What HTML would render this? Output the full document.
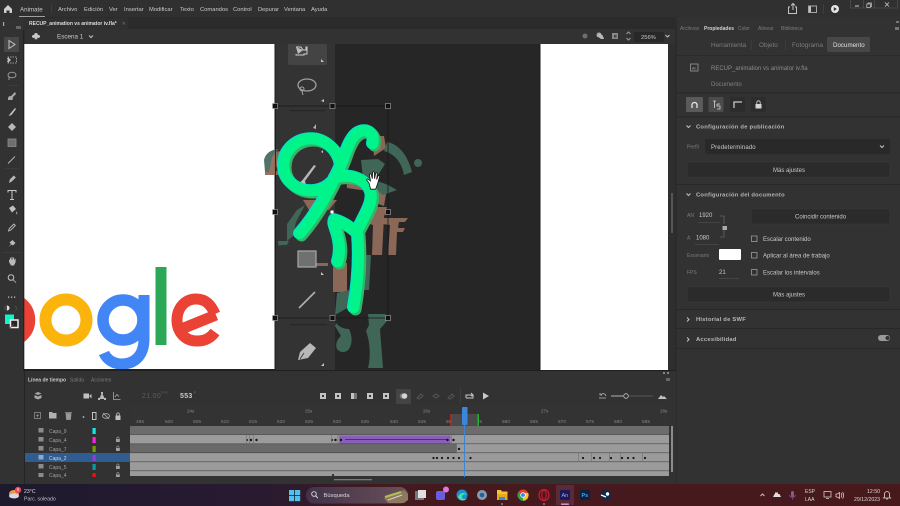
<!DOCTYPE html>
<html><head><meta charset="utf-8"><style>
html,body{margin:0;padding:0;width:900px;height:506px;overflow:hidden;background:#323232}
svg{display:block;position:absolute;left:0;top:0;filter:blur(.3px)}
text{font-family:"Liberation Sans",sans-serif;font-size:5.8px;fill:#cacaca}
.d{fill:#7c7c7c}.b{font-weight:bold}.h{font-weight:bold;letter-spacing:.25px;fill:#b8b8b8}
.i{fill:none;stroke:#c4c4c4;stroke-width:1}
</style></head><body>
<svg width="900" height="506" viewBox="0 0 900 506" xmlns="http://www.w3.org/2000/svg">
<defs>
<linearGradient id="tb" x1="0" x2="1" y1="0" y2="0"><stop offset="0" stop-color="#1d1a2e"/><stop offset=".3" stop-color="#2a1a30"/><stop offset=".42" stop-color="#44191f"/><stop offset="1" stop-color="#47191b"/></linearGradient>
<linearGradient id="sp" x1="0" x2="1" y1="0" y2="0"><stop offset="0" stop-color="#40324a"/><stop offset="1" stop-color="#6a5058"/></linearGradient>
<clipPath id="gc"><rect x="24" y="44" width="251" height="325"/></clipPath>
</defs>
<rect width="900" height="506" fill="#323232"/>
<!-- title bar -->
<rect width="900" height="17" fill="#303030"/>
<path d="M4 9 L8 5 L12 9 V13 H9.500 V10.500 H6.500 V13 H4Z" fill="#d0d0d0"/>
<text x="20" y="11.500" style="font-size:6.200px">Animate</text>
<rect x="19" y="16" width="26" height="1" fill="#a0a0a0"/>
<rect x="51" y="4" width=".7" height="9" fill="#444"/>
<text x="58" y="11">Archivo</text><text x="84" y="11">Edición</text><text x="109" y="11">Ver</text><text x="124" y="11">Insertar</text><text x="149" y="11">Modificar</text><text x="180" y="11">Texto</text><text x="200" y="11">Comandos</text><text x="233" y="11">Control</text><text x="258" y="11">Depurar</text><text x="284" y="11">Ventana</text><text x="311" y="11">Ayuda</text>
<path d="M790 7h-1.500v6.500h8v-6.500h-1.500M793 10V4M791 5.500l2-2 2 2" class="i"/>
<rect x="808.500" y="6" width="8" height="6.500" class="i" stroke-opacity=".8"/><rect x="809" y="6.500" width="2" height="5.500" fill="#c4c4c4"/>
<rect x="823" y="4" width=".7" height="10" fill="#444"/>
<circle cx="835" cy="9" r="4" fill="#e4e4e4"/><path d="M833.800 7l3 2-3 2z" fill="#303030"/>
<rect x="850.500" y="-1" width="47" height="9" fill="none" stroke="#555" stroke-width=".6"/>
<rect x="855" y="5.500" width="4" height="1" fill="#ccc"/><rect x="868" y="3" width="3.500" height="3.500" fill="none" stroke="#ccc" stroke-width=".7"/><rect x="866.800" y="4" width="3.500" height="3.500" fill="#303030" stroke="#ccc" stroke-width=".7"/>
<path d="M885 2.500l4 4M889 2.500l-4 4" stroke="#ccc" stroke-width=".8"/>
<rect x="863" y="0" width=".6" height="8" fill="#555"/><rect x="874" y="0" width=".6" height="8" fill="#555"/>
<!-- tab rows -->
<rect x="0" y="17" width="675" height="12" fill="#2b2b2b"/>
<rect x="24" y="18" width="104" height="11" fill="#303030"/>
<text class="b" x="29" y="25" style="font-size:5px;fill:#dcdcdc">RECUP_animation vs animator iv.fla*</text>
<text x="122" y="25.500" class="d" style="font-size:6px">×</text>
<rect x="24" y="29" width="651" height="15" fill="#323232"/>
<path d="M36 33c1.500 0 2 1.200 1.700 2 1.200-.4 2.500.4 2.300 1.800-.2 1.300-2 1.600-3 .7l.5 1.700h-3l.5-1.700c-1 .9-2.800.6-3-.7-.2-1.400 1.100-2.200 2.300-1.800-.3-.8.2-2 1.700-2z" fill="#c8c8c8"/>
<text x="57" y="38.500" style="font-size:6.300px">Escena 1</text>
<path d="M89 35.500l2 2 2-2" class="i"/>
<circle cx="585" cy="36" r="2.500" fill="#6e6e6e"/>
<circle cx="599" cy="35" r="2.500" fill="#a8a8a8"/><path d="M597 36l3-3 3 3 1 3-3 0z" fill="#b8b8b8"/>
<rect x="612" y="33" width="6" height="6" fill="#888"/><rect x="614" y="35" width="2.500" height="2.500" fill="#444"/>
<path d="M626.500 34l2-2 2 2M626.500 38l2 2 2-2" class="i" stroke-opacity=".7"/>
<rect x="634" y="32" width="30" height="10" fill="#282828"/>
<text x="641" y="39" style="font-size:5.800px;fill:#c8c8c8">256%</text>
<path d="M665.500 35l2 2 2-2" class="i"/>
<!-- canvas -->
<rect x="24" y="44" width="644" height="327" fill="#262626"/>
<rect x="24" y="44" width="251" height="326" fill="#fff"/>
<rect x="275" y="44" width="60" height="326" fill="#333"/>
<rect x="540" y="44" width="128" height="326" fill="#fff"/>
<rect x="274.500" y="44" width="1" height="326" fill="#1c1c1c"/>
<rect x="539.500" y="44" width="1" height="326" fill="#1c1c1c"/>
<!-- google -->
<g fill="none" clip-path="url(#gc)">
<circle cx="8" cy="320" r="20.500" stroke="#ea4335" stroke-width="13.500"/>
<circle cx="66" cy="320" r="20.500" stroke="#fbb40b" stroke-width="12"/>
<circle cx="123" cy="320" r="20" stroke="#4285f4" stroke-width="11.500"/>
<path d="M144 295v44c0 19-12 25-22 25-8 0-15-4-18-11" stroke="#4285f4" stroke-width="11"/>
<rect x="155.500" y="267" width="11" height="78" fill="#2aa855"/>
<path d="M216 315l-37 15M215 332c-5 7-11 9-18 9-13 0-20-10-20-21 0-12 8-21 19-21 10 0 15 6 19 15" stroke="#ea4335" stroke-width="11"/>
</g>
<rect x="24" y="369" width="251" height="2" fill="#222"/>
<!-- left toolbar -->
<rect x="0" y="17" width="24" height="354" fill="#323232"/>
<rect x="23.300" y="30" width="1" height="341" fill="#1d1d1d"/>
<rect x="3" y="22" width="1.200" height="4" fill="#aaa"/><rect x="16" y="26" width="5" height="3" fill="#666"/>
<rect x="4" y="37" width="15" height="15" rx="1" fill="#484848"/>
<path d="M9 40.500v8l6-4z" class="i" stroke="#cfcfcf"/>
<rect x="7.500" y="57" width="9" height="6" fill="none" stroke="#bbb" stroke-width=".8" stroke-dasharray="1.500 1"/><path d="M8 57l3 3-3 3z" fill="#c0c0c0"/>
<ellipse cx="12" cy="75" rx="4" ry="2.800" class="i" stroke-opacity=".7"/><path d="M9 77v3" class="i" stroke-opacity=".7"/>
<rect x="7" y="85" width="11" height=".6" fill="#444"/>
<path d="M8 98c1-3 3-1 4-3l3-3 1 2-3 3c-1 2 1 2-1 3H8z" fill="#a8a8a8"/>
<path d="M8.500 116l1.500-2 5-6 1 1-4.500 6z" fill="#c4c4c4"/>
<path d="M12 123l4 4-4 4-4-4z" fill="#b8b8b8"/>
<rect x="8" y="139" width="8" height="7.500" fill="#6e6e6e" stroke="#8c8c8c" stroke-width=".8"/>
<path d="M8 163.500l7-7" stroke="#b8b8b8" stroke-width=".9"/>
<rect x="5" y="168" width="14" height=".6" fill="#444"/>
<path d="M9 183l.8-3.500 4-4 2 2-4 4z" fill="#b8b8b8"/>
<path d="M8 192.500v-2h8v2M12 190.500v9M10 199.500h4" fill="none" stroke="#c8c8c8" stroke-width="1"/>
<path d="M9 208l4-2.500 3 3.500-4 3.500zM16 211l1.500 2.500-1 1z" fill="#c0c0c0"/>
<path d="M8.500 231l.8-2.500 4.500-4.500 1.500 1.500-4.500 4.500z" fill="none" stroke="#c0c0c0" stroke-width=".9"/>
<path d="M8.500 247l2.500-3-1.500-1.500 3-2.500 3 3-2.500 2.500-1.500-1z" fill="#b8b8b8"/>
<rect x="3" y="252" width="18" height=".6" fill="#444"/>
<path d="M9 262v-2.500l1 .5v-2.300h1v1.800h.5v-2.500h1v2.500h.5v-2h1v2.300h.6v-1h1v3.500l-1.600 3.200h-3z" fill="#b8b8b8"/>
<circle cx="11" cy="277.500" r="2.800" class="i" stroke="#a8a8a8"/><path d="M13 279.700l3 3" stroke="#a8a8a8" stroke-width="1"/>
<rect x="8" y="296.500" width="1.300" height="1.300" fill="#bbb"/><rect x="11" y="296.500" width="1.300" height="1.300" fill="#bbb"/><rect x="14" y="296.500" width="1.300" height="1.300" fill="#bbb"/>
<circle cx="7" cy="308" r="2.500" fill="#e0e0e0"/><path d="M7 305.500a2.500 2.500 0 000 5z" fill="#444"/><path d="M15 306.500c2 .5 2 3 .5 4" stroke="#555" fill="none" stroke-width=".7"/>
<rect x="5" y="314.500" width="9" height="9.500" fill="#12f4c4"/>
<rect x="10.500" y="320" width="7.500" height="7.500" fill="#242424" stroke="#f0f0f0" stroke-width="1.500"/>
<path d="M10 328l4-4" stroke="#e02020" stroke-width=".8"/>
<!-- stage-embedded large icons -->
<rect x="288" y="44" width="39" height="21" rx="2" fill="#444"/>
<path d="M296 47h5l2 3h3v-3h1v7h-3v1h-8v-1" fill="none" stroke="#ccc" stroke-width="1"/><path d="M296 47l7 3-5 4z" fill="#bbb"/>
<path d="M321 59l3 3h-3z" fill="#c4c4c4"/>
<ellipse cx="307" cy="85" rx="9" ry="6" fill="none" stroke="#a0a0a0" stroke-width="1.300"/><circle cx="302" cy="89" r="2" fill="none" stroke="#a0a0a0" stroke-width="1"/><path d="M302 91l1 4" stroke="#a0a0a0" stroke-width="1"/>
<path d="M321 101l3-2v3z" fill="#c4c4c4"/>
<rect x="290" y="110" width="35" height="1.200" fill="#262626"/>
<path d="M313 128l3-4v5z" fill="#b0b0b0"/><path d="M321 152l2-2v3z" fill="#c4c4c4"/>
<path d="M301 182l1 3 14-19-2-1z" fill="#b8b8b8"/><circle cx="303" cy="183" r="2.500" fill="#c0c0c0"/>
<!-- ghost shapes -->
<g fill="#8f6a5a" fill-opacity=".95">
<path d="M265 171l5-19 14-1-9 19 8 5h-18z"/>
<path d="M372 136l12 0 2 12-12 8z"/>
<path d="M346 178l27 0 14 10-3 18-8-3-8-12-21-3z"/>
<path d="M303 200h34l-8 10h-20z"/>
<path d="M363 207h24l-3 10-2 38h-10l1-30-10-3z"/>
<path d="M382 218h26l-3 4h-6l-1 6h7l-2 4h-6l-1 23h-8l2-30-8-1z"/>
<path d="M333 263h14v29h-14zM316 263h12v3h-12z"/>
<path d="M280 176l7-2 5 4-6 1z"/>
</g>
<g fill="#3f6656">
<path d="M264 160c2-8 8-10 14-11l-6 8-3 15h-4z" fill="#4f7368"/>
<path d="M387 142c12 2 21 14 25 30l-8 3c-2-12-9-21-20-24zM361 160l17-1 7 5-10 16 13 5 9 5-14 5-20-17z"/>
<circle cx="418" cy="163" r="4"/>
<path d="M287 224l10-14 8-5-9 17-3 14-6 5z"/>
<path d="M278 241h11l-2 4-5 0c-3 1-4 1-4-4z"/>
<path d="M336 323c3 4 8 6 13 6 3 6 4 14 0 20-3 4-9 4-12 0-2-4 0-10 4-13l-6-10z"/>
<path d="M368 314h17l2 7-7 8 3 39h-15c3-12 2-26-2-37l3-6z"/>
<path d="M362 255h9l-2 35h-8zM337 293l12-3v17l-14 8z"/>
</g>
<!-- selection box -->
<rect x="275.500" y="106" width="112.500" height="212" fill="none" stroke="#1a1a1a" stroke-width=".8"/>
<rect x="290" y="324" width="37" height="1.200" fill="#262626"/>
<!-- rect / line / pen -->
<rect x="298" y="251" width="18" height="16" fill="#707070" stroke="#a8a8a8" stroke-width="1.200"/>
<path d="M321 272l3 3h-3z" fill="#c4c4c4"/>
<path d="M299 308l16-16" stroke="#b0b0b0" stroke-width="1.600"/>
<path d="M298 360l2-8 10-9 6 5-8 10z" fill="#b8b8b8"/><path d="M304 353l-4 6" stroke="#333" stroke-width=".8"/>
<path d="M321 366l3-3v3z" fill="#c4c4c4"/>
<!-- stick figure -->
<g fill="none" stroke-linecap="round" stroke-linejoin="round">
<g stroke="#35b565" stroke-width="12" transform="translate(1.500,1.500)">
<path d="M373 144C375 136 371 131 365 131C356 131 351 140 347 150C344 160 335 180 324 200C317 212 308 225 300 234"/>
<path d="M341 165C338 150 326 139 312 139C296 139 284 151 284 166C284 181 297 191 312 191C325 191 335 183 340 170"/>
<path d="M335 178C350 174 366 178 371 192C374 202 366 214 358 230"/>
<path d="M338 262C341 252 340 244 338 236C336 228 333 224 335 220C343 222 351 227 358 234C360 258 358 285 354 308"/>
</g>
<g stroke="#00e8bd" stroke-width="12" transform="translate(-1,-.8)">
<path d="M373 144C375 136 371 131 365 131C356 131 351 140 347 150C344 160 335 180 324 200C317 212 308 225 300 234"/>
<path d="M341 165C338 150 326 139 312 139C296 139 284 151 284 166C284 181 297 191 312 191C325 191 335 183 340 170"/>
<path d="M335 178C350 174 366 178 371 192C374 202 366 214 358 230"/>
<path d="M338 262C341 252 340 244 338 236C336 228 333 224 335 220C343 222 351 227 358 234C360 258 358 285 354 308"/>
</g>
<g stroke="#00f48a" stroke-width="10.500">
<path d="M373 144C375 136 371 131 365 131C356 131 351 140 347 150C344 160 335 180 324 200C317 212 308 225 300 234"/>
<path d="M341 165C338 150 326 139 312 139C296 139 284 151 284 166C284 181 297 191 312 191C325 191 335 183 340 170"/>
<path d="M335 178C350 174 366 178 371 192C374 202 366 214 358 230"/>
<path d="M338 262C341 252 340 244 338 236C336 228 333 224 335 220C343 222 351 227 358 234C360 258 358 285 354 308"/>
</g>
</g>
<!-- handles -->
<g fill="#111" stroke="#aaa" stroke-width=".6">
<rect x="272.500" y="103.500" width="5" height="5"/><rect x="330" y="103.500" width="5" height="5"/><rect x="385.500" y="103.500" width="5" height="5"/>
<rect x="272.500" y="209.500" width="5" height="5"/><rect x="385.500" y="209.500" width="5" height="5"/>
<rect x="272.500" y="315.500" width="5" height="5"/><rect x="330" y="315.500" width="5" height="5"/><rect x="385.500" y="315.500" width="5" height="5"/>
</g>
<rect x="330.500" y="210.500" width="3" height="3" fill="#fff"/>
<!-- hand cursor -->
<path d="M369 183l-2-2.500c-1-1 .5-2 1.500-1l2 1.500-1-6c-.2-1.300 1.500-1.500 1.800-.3l1 4 .3-6c0-1.300 1.800-1.300 1.800 0l.2 6 1-5c.3-1.200 1.900-1 1.700.3l-.7 5.500 1.500-3.500c.5-1.100 1.900-.5 1.500.7l-2 7-2 5.500h-5z" fill="#fff" stroke="#111" stroke-width=".8"/>
<!-- right panel -->
<rect x="668" y="44" width="8" height="327" fill="#2e2e2e"/>
<rect x="671" y="193" width="2" height="40" fill="#555"/>
<rect x="676" y="17" width="224" height="467" fill="#323232"/>
<rect x="675.500" y="17" width="1" height="467" fill="#262626"/>
<text x="680" y="30" class="d" style="font-size:5px">Archivos</text>
<text x="704" y="30" class="b" style="font-size:5px;fill:#d0d0d0">Propiedades</text>
<text x="738" y="30" class="d" style="font-size:5px">Color</text>
<text x="758" y="30" class="d" style="font-size:5px">Alinear</text>
<text x="781" y="30" class="d" style="font-size:5px">Biblioteca</text>
<rect x="895" y="27" width="4" height="3" fill="#777"/><rect x="896" y="21" width="3" height="2" fill="#777"/>
<rect x="827" y="37" width="43" height="15" rx="1" fill="#474747"/>
<text x="711" y="47" class="d" style="font-size:6.400px">Herramienta</text>
<rect x="751" y="39" width=".6" height="11" fill="#444"/>
<text x="759" y="47" class="d" style="font-size:6.400px">Objeto</text>
<rect x="785" y="39" width=".6" height="11" fill="#444"/>
<text x="792" y="47" class="d" style="font-size:6.400px">Fotograma</text>
<text x="833" y="47" style="font-size:6.200px;fill:#e0e0e0">Documento</text>
<rect x="676" y="55" width="224" height=".8" fill="#2a2a2a"/>
<rect x="690.500" y="64" width="7.500" height="7" fill="none" stroke="#9a9a9a" stroke-width=".8"/>
<text x="692" y="69.500" style="font-size:3.500px;fill:#aaa">An</text>
<text x="711" y="70" style="font-size:6px;fill:#8c8c8c">RECUP_animation vs animator iv.fla</text>
<text x="711" y="86" style="font-size:6px;fill:#808080">Documento</text>
<rect x="676" y="92.500" width="224" height=".8" fill="#262626"/>
<rect x="686" y="97" width="17" height="15" rx="1" fill="#5a5a5a"/>
<path d="M692 108v-3a2.500 2.500 0 015 0v3" fill="none" stroke="#eee" stroke-width="1.200"/>
<rect x="708.500" y="97" width="15" height="15" rx="1" fill="#4b4b4b"/>
<path d="M713 101h3M714.500 101v7M717 104h3M717 104v2h3v3h-3" fill="none" stroke="#d4d4d4" stroke-width=".8"/>
<rect x="730" y="97" width="15" height="15" rx="1" fill="#2c2c2c"/>
<path d="M734 108v-6h8" fill="none" stroke="#c8c8c8" stroke-width="1.300"/>
<rect x="751" y="97" width="15" height="15" rx="1" fill="#2c2c2c"/>
<rect x="755.500" y="104" width="6" height="4.500" fill="#d4d4d4"/><path d="M756.800 104v-1.500a1.700 1.700 0 013.400 0v1.500" fill="none" stroke="#d4d4d4" stroke-width=".8"/>
<rect x="676" y="116.500" width="224" height=".8" fill="#262626"/>
<path d="M686.500 125.500l2 2 2-2" class="i"/>
<text x="696" y="128.500" class="h">Configuración de publicación</text>
<text x="687" y="148.500" class="d" style="font-size:5.200px">Perfil</text>
<rect x="705" y="139" width="185" height="15" rx="1" fill="#292929"/>
<text x="711" y="149" style="font-size:6px;letter-spacing:.15px">Predeterminado</text>
<path d="M880 145.500l2 2 2-2" class="i"/>
<rect x="687" y="162" width="203" height="15" rx="1" fill="#2b2b2b" stroke="#3b3b3b" stroke-width=".6"/>
<text x="773" y="172" style="font-size:6px">Más ajustes</text>
<rect x="676" y="184" width="224" height=".8" fill="#262626"/>
<path d="M686.500 193.500l2 2 2-2" class="i"/>
<text x="696" y="196.500" class="h">Configuración del documento</text>
<text x="687" y="217" class="d" style="font-size:5px">AN</text>
<text x="699" y="217" style="font-size:6px">1920</text>
<rect x="698" y="222" width="22" height=".5" fill="#555"/>
<path d="M720 216h4v8M724 230v7h-4" fill="none" stroke="#777" stroke-width=".6"/>
<rect x="722.500" y="226" width="4.500" height="4" fill="#aaa"/>
<text x="687" y="239.500" class="d" style="font-size:5px">A</text>
<text x="696" y="239.500" style="font-size:6px">1080</text>
<rect x="695" y="244" width="24" height=".5" fill="#555"/>
<rect x="751" y="209" width="139" height="15" rx="1" fill="#2b2b2b" stroke="#3b3b3b" stroke-width=".6"/>
<text x="795" y="218.500" style="font-size:6px">Coincidir contenido</text>
<rect x="751.500" y="236" width="5.500" height="5.500" fill="none" stroke="#aaa" stroke-width=".7"/>
<text x="763" y="241" style="font-size:6px">Escalar contenido</text>
<text x="687" y="257" class="d" style="font-size:5px">Escenario</text>
<rect x="719" y="249" width="22" height="11" rx="1" fill="#fff"/>
<rect x="751.500" y="252.500" width="5.500" height="5.500" fill="none" stroke="#aaa" stroke-width=".7"/>
<text x="763" y="257.500" style="font-size:6px">Aplicar al área de trabajo</text>
<text x="687" y="274" class="d" style="font-size:5px">FPS</text>
<text x="719" y="274" style="font-size:6px">21</text>
<rect x="719" y="278.500" width="20" height=".5" fill="#555"/>
<rect x="751.500" y="269.500" width="5.500" height="5.500" fill="none" stroke="#aaa" stroke-width=".7"/>
<text x="763" y="274.500" style="font-size:6px">Escalar los intervalos</text>
<rect x="687" y="287" width="203" height="15" rx="1" fill="#2b2b2b" stroke="#3b3b3b" stroke-width=".6"/>
<text x="773" y="296.500" style="font-size:6px">Más ajustes</text>
<rect x="676" y="309" width="224" height=".8" fill="#262626"/>
<path d="M687 317.500l2 2-2 2" class="i"/>
<text x="696" y="321" class="h">Historial de SWF</text>
<rect x="676" y="328" width="224" height=".8" fill="#262626"/>
<path d="M687 337.500l2 2-2 2" class="i"/>
<text x="696" y="341" class="h">Accesibilidad</text>
<rect x="878" y="335" width="12" height="6" rx="3" fill="#9a9a9a"/><circle cx="887.500" cy="338" r="2" fill="#333"/>
<rect x="676" y="348" width="224" height=".8" fill="#262626"/>
<!-- timeline -->
<rect x="0" y="371" width="676" height="113" fill="#323232"/>
<rect x="24" y="370" width="652" height="1" fill="#1f1f1f"/>
<rect x="24" y="371" width=".8" height="113" fill="#222"/>
<text x="28" y="381.500" class="b" style="font-size:5px;fill:#c8c8c8">Línea de tiempo</text>
<text x="70" y="381.500" class="d" style="font-size:5px">Salida</text>
<text x="91" y="381.500" class="d" style="font-size:5px">Acciones</text>
<rect x="663" y="372" width="2" height="2" fill="#888"/><rect x="667" y="372" width="2" height="2" fill="#888"/><rect x="666" y="378" width="4" height="3" fill="#666"/>
<path d="M38 392l3.500 1.500-3.500 1.500-3.500-1.500zM34.500 395l3.500 1.500 3.500-1.500v3l-3.500 1.500-3.500-1.500z" fill="#a8a8a8"/>
<rect x="83.500" y="393.500" width="5.500" height="5" fill="#c0c0c0"/><path d="M89 396l2.500-2v4.500z" fill="#c0c0c0"/>
<path d="M99 399l3-6 3 6zM101 392h2v2h-2zM98 398h2v2h-2zM104 398h2v2h-2z" fill="#b8b8b8"/>
<path d="M113.500 392v7.500h7M115 397l2-2.500 2 2" fill="none" stroke="#aaa" stroke-width=".8"/>
<text x="142" y="398" style="font-size:7px;fill:#5c5c5c;letter-spacing:.3px">21.00</text>
<text x="161" y="394" style="font-size:3.500px;fill:#5c5c5c">FPS</text>
<text x="180" y="398" class="b" style="font-size:7px;fill:#c8c8c8;letter-spacing:.3px">553</text>
<text x="194" y="394" style="font-size:3.500px;fill:#777">F</text>
<g fill="#c4c4c4"><rect x="320" y="393" width="6" height="6"/><rect x="335" y="393" width="6" height="6"/><rect x="351" y="393" width="6" height="6"/><rect x="367" y="393" width="6" height="6"/><rect x="383" y="393" width="6" height="6"/></g>
<rect x="322" y="395" width="2" height="2" fill="#333"/><rect x="337" y="395" width="2" height="2" fill="#333"/><rect x="354" y="393" width="3" height="6" fill="#777"/><rect x="369" y="395" width="2" height="2" fill="#333"/><rect x="385" y="395" width="2" height="2" fill="#333"/>
<rect x="396" y="389" width="15" height="15" rx="1" fill="#444"/>
<circle cx="402.500" cy="396" r="2.800" fill="#777"/><circle cx="404.500" cy="396" r="2.800" fill="#d4d4d4"/>
<g fill="none" stroke="#555" stroke-width="1"><path d="M417 398l4-4 2 2-4 3zM433 396l3-2 3 2-3 2zM448 398l4-4 2 2-4 3z"/></g>
<rect x="460" y="388" width=".7" height="16" fill="#444"/>
<path d="M466 398v-3h7v3h-7M471 393l2 2-2 1" fill="none" stroke="#c8c8c8" stroke-width="1"/>
<path d="M483 392.500l6 3.500-6 3.500z" fill="#c8c8c8"/>
<path d="M599 398h7M601 395c1-2 4-2 5 1M600 393v2h2" fill="none" stroke="#b8b8b8" stroke-width=".8"/>
<rect x="611" y="395.500" width="12" height="1" fill="#b0b0b0"/><rect x="629" y="395.500" width="24" height="1" fill="#555"/>
<circle cx="626" cy="396" r="2.300" fill="#323232" stroke="#c8c8c8" stroke-width=".8"/>
<path d="M658 399l3-4 2 2 1-1 3 3z" fill="#c0c0c0"/>
<!-- ruler -->
<rect x="130" y="405" width="539" height="21" fill="#333"/>
<text x="187" y="412.500" style="font-size:4.500px;fill:#888">24s</text><text x="305" y="412.500" style="font-size:4.500px;fill:#888">25s</text><text x="423" y="412.500" style="font-size:4.500px;fill:#888">26s</text><text x="541" y="412.500" style="font-size:4.500px;fill:#888">27s</text><text x="660" y="412.500" style="font-size:4.500px;fill:#888">28s</text>
<text x="136" y="423" style="font-size:4.800px;fill:#858585">495</text><text x="165" y="423" style="font-size:4.800px;fill:#858585">500</text><text x="193" y="423" style="font-size:4.800px;fill:#858585">505</text><text x="221" y="423" style="font-size:4.800px;fill:#858585">510</text><text x="249" y="423" style="font-size:4.800px;fill:#858585">515</text><text x="277" y="423" style="font-size:4.800px;fill:#858585">520</text><text x="305" y="423" style="font-size:4.800px;fill:#858585">525</text><text x="333" y="423" style="font-size:4.800px;fill:#858585">530</text><text x="361" y="423" style="font-size:4.800px;fill:#858585">535</text><text x="390" y="423" style="font-size:4.800px;fill:#858585">540</text><text x="418" y="423" style="font-size:4.800px;fill:#858585">545</text><text x="446" y="423" style="font-size:4.800px;fill:#858585">550</text><text x="474" y="423" style="font-size:4.800px;fill:#858585">555</text><text x="502" y="423" style="font-size:4.800px;fill:#858585">560</text><text x="530" y="423" style="font-size:4.800px;fill:#858585">565</text><text x="558" y="423" style="font-size:4.800px;fill:#858585">570</text><text x="586" y="423" style="font-size:4.800px;fill:#858585">575</text><text x="614" y="423" style="font-size:4.800px;fill:#858585">580</text><text x="642" y="423" style="font-size:4.800px;fill:#858585">585</text>
<rect x="451" y="414" width="27" height="12" fill="#4a4a4a"/>
<rect x="450.300" y="414" width="1.500" height="12" fill="#d02020"/>
<rect x="477.500" y="414" width="1.500" height="12" fill="#22b030"/>
<!-- layer header -->
<rect x="34.500" y="412.500" width="6" height="6" fill="none" stroke="#999" stroke-width=".7"/><path d="M37.500 414v3.500M36 415.700h3" stroke="#999" stroke-width=".6"/>
<path d="M49 412h3l1 1h3.500v5.500H49z" fill="#b0b0b0"/>
<path d="M66 413.500h5l-.5 6h-4zM65 412.500h7" fill="#999" stroke="#999" stroke-width=".7"/>
<circle cx="83.500" cy="417" r=".9" fill="#c0c0c0"/>
<rect x="92.500" y="412.500" width="3.500" height="7" fill="none" stroke="#d0d0d0" stroke-width=".9"/>
<ellipse cx="106" cy="416" rx="3.500" ry="2.300" fill="none" stroke="#b0b0b0" stroke-width=".8"/><path d="M103 413l6 6" stroke="#b0b0b0" stroke-width=".8"/>
<rect x="115.500" y="415.500" width="5" height="4.500" fill="#c0c0c0"/><path d="M116.700 415.500v-1.300a1.300 1.300 0 012.600 0v1.300" fill="none" stroke="#c0c0c0" stroke-width=".8"/>
<!-- layers -->
<rect x="25" y="453" width="105" height="9" fill="#2f5d91"/>
<text x="49" y="433" style="font-size:5px;fill:#a0a0a0">Capa_9</text>
<text x="49" y="442" style="font-size:5px;fill:#a0a0a0">Capa_4</text>
<text x="49" y="451" style="font-size:5px;fill:#a0a0a0">Capa_7</text>
<text x="49" y="460" style="font-size:5px;fill:#d4d4d4">Capa_2</text>
<text x="49" y="469" style="font-size:5px;fill:#a0a0a0">Capa_5</text>
<text x="49" y="477" style="font-size:5px;fill:#a0a0a0">Capa_4</text>
<g fill="#8c8c8c"><rect x="38.500" y="428" width="5" height="4.500"/><rect x="38.500" y="437" width="5" height="4.500"/><rect x="38.500" y="446" width="5" height="4.500"/><rect x="38.500" y="455" width="5" height="4.500" fill="#8fa8c4"/><rect x="38.500" y="464" width="5" height="4.500"/><rect x="38.500" y="473" width="5" height="4"/></g>
<rect x="92.500" y="428" width="3.200" height="6" fill="#10e8e8"/>
<rect x="92.500" y="437" width="3.200" height="6" fill="#ff20e0"/>
<rect x="92.500" y="446" width="3.200" height="6" fill="#70a000"/>
<rect x="92.500" y="455" width="3.200" height="6" fill="#9a38d8"/>
<rect x="92.500" y="464" width="3.200" height="6" fill="#00a098"/>
<rect x="92.500" y="473" width="3.200" height="4" fill="#f01010"/>
<g fill="#a0a0a0"><rect x="116" y="439" width="3.800" height="3"/><rect x="116" y="448" width="3.800" height="3"/><rect x="116" y="466" width="3.800" height="3"/><rect x="116" y="474.500" width="3.800" height="2.500"/></g>
<path d="M116.800 439v-1a1.100 1.100 0 012.200 0v1M116.800 448v-1a1.100 1.100 0 012.200 0v1M116.800 466v-1a1.100 1.100 0 012.200 0v1M116.800 474.500v-1a1.100 1.100 0 012.200 0v1" fill="none" stroke="#a0a0a0" stroke-width=".6"/>
<!-- frames -->
<rect x="130" y="426" width="539" height="8.500" fill="#6c6c6c"/>
<rect x="130" y="435" width="539" height="8.500" fill="#9b9b9b"/>
<rect x="130" y="444" width="327" height="8.500" fill="#696969"/>
<rect x="457" y="444" width="212" height="8.500" fill="#9b9b9b"/>
<rect x="130" y="453" width="539" height="8.500" fill="#9b9b9b"/>
<rect x="130" y="462" width="539" height="8.500" fill="#9b9b9b"/>
<rect x="130" y="471" width="539" height="5" fill="#9b9b9b"/>
<rect x="339" y="435.500" width="111.500" height="8" fill="#8a5fba"/>
<rect x="345" y="439.300" width="102" height=".7" fill="#2e2440"/>
<g fill="#141414">
<circle cx="247" cy="440" r="1"/><circle cx="251" cy="440" r="1.200"/><circle cx="256.500" cy="440" r="1.200"/>
<circle cx="332" cy="440" r="1"/><circle cx="335.500" cy="440" r="1.200"/><circle cx="341" cy="440" r="1.200"/>
<circle cx="447.500" cy="440" r="1.200"/><circle cx="453.500" cy="440" r="1.200"/>
<circle cx="459" cy="449" r="1.200"/>
<circle cx="437" cy="458" r="1.100"/><circle cx="442" cy="458" r="1.100"/><circle cx="448" cy="458" r="1.100"/><circle cx="453.500" cy="458" r="1.100"/><circle cx="459" cy="458" r="1.100"/><circle cx="470.500" cy="458" r="1.100"/><circle cx="433.500" cy="458" r="1.100"/>
<circle cx="583" cy="458" r="1.100"/><circle cx="594" cy="458" r="1.100"/><circle cx="600" cy="458" r="1.100"/><circle cx="611" cy="458" r="1.100"/><circle cx="622" cy="458" r="1.100"/><circle cx="628" cy="458" r="1.100"/><circle cx="633.500" cy="458" r="1.100"/><circle cx="645" cy="458" r="1.100"/>
<circle cx="333" cy="475" r="1"/>
</g>
<g fill="#777"><rect x="246" y="435" width=".7" height="8"/><rect x="249" y="435" width=".7" height="8"/><rect x="253" y="435" width=".7" height="8"/><rect x="331" y="435" width=".7" height="8"/><rect x="337.500" y="435" width=".7" height="8"/><rect x="451" y="435" width=".7" height="8"/><rect x="456" y="444" width=".7" height="8"/><rect x="578" y="453" width=".7" height="8"/><rect x="591" y="453" width=".7" height="8"/><rect x="609" y="453" width=".7" height="8"/><rect x="620" y="453" width=".7" height="8"/><rect x="642" y="453" width=".7" height="8"/></g>
<rect x="130" y="434.500" width="539" height=".5" fill="#444"/>
<rect x="130" y="443.500" width="539" height=".6" fill="#444"/>
<rect x="130" y="452.500" width="539" height=".6" fill="#444"/>
<rect x="130" y="461.500" width="539" height=".6" fill="#444"/>
<rect x="130" y="470.500" width="539" height=".6" fill="#444"/>
<!-- playhead -->
<rect x="464" y="425" width="1" height="52" fill="#3c86da"/>
<rect x="462" y="407" width="5.500" height="18" rx=".8" fill="#3c86da"/>
<rect x="671" y="426" width="2" height="46" fill="#8c8c8c"/>
<rect x="334" y="479" width="38" height="1.300" fill="#7a7a7a"/>
<!-- taskbar -->
<rect x="0" y="484" width="900" height="22" fill="url(#tb)"/>
<ellipse cx="14" cy="494" rx="5" ry="4" fill="#e89a48"/><ellipse cx="14" cy="496" rx="5" ry="2.500" fill="#d8d8e8"/>
<circle cx="18" cy="490" r="3.200" fill="#e84a58"/><rect x="17.600" y="488" width=".8" height="3" fill="#fff"/>
<text x="24" y="493" style="font-size:5.200px;fill:#dcdcdc">23°C</text>
<text x="24" y="500.500" style="font-size:5.200px;fill:#c0c0c0">Parc. soleado</text>
<g fill="#4cc2ee"><rect x="289" y="490" width="5.200" height="5.200"/><rect x="295" y="490" width="5.200" height="5.200"/><rect x="289" y="496" width="5.200" height="5.200"/><rect x="295" y="496" width="5.200" height="5.200"/></g>
<rect x="306" y="487" width="102" height="16.500" rx="8" fill="url(#sp)"/>
<circle cx="314" cy="494" r="2.300" fill="none" stroke="#ddd" stroke-width=".9"/><path d="M315.800 496l2 2" stroke="#ddd" stroke-width=".9"/>
<text x="323.500" y="497" style="font-size:5.800px;fill:#d8d8d8">Búsqueda</text>
<path d="M384 498l10-4 10-4 4 4v6l-4 3h-16z" fill="#8b7a60"/><path d="M385 497l16-5" stroke="#b0c050" stroke-width="2"/><path d="M388 500l14-5" stroke="#e0d0c0" stroke-width="1"/>
<rect x="415" y="491" width="9" height="9" fill="#777"/><rect x="418" y="490" width="8" height="8" fill="#e0e0e0"/>
<rect x="436" y="491" width="9" height="9" rx="2" fill="#6a5be0"/><circle cx="446" cy="489.500" r="3" fill="#d878d8"/>
<circle cx="462" cy="495" r="5.500" fill="#1a90d0"/><path d="M458 497c2-5 7-5 9-2-2-1-5-1-5 2 0 2 3 3 5 1-2 4-7 3-9-1z" fill="#4ce0a0"/>
<circle cx="482" cy="495" r="5" fill="#8a9aa8"/><circle cx="482" cy="495" r="2.300" fill="#2060a8"/>
<path d="M497 490h4l1 1.500h5.500V500H497z" fill="#f4c430"/><rect x="497" y="494" width="10.500" height="6" fill="#e8a820"/><rect x="499" y="497" width="6" height="3" fill="#3090d8"/>
<circle cx="523" cy="495" r="5.500" fill="#e04030"/><path d="M523 495l-4.800-2.800a5.500 5.500 0 000 5.500l2.400 2.700a5.500 5.500 0 007.500-2.500z" fill="#30a050"/><path d="M523 500.500a5.500 5.500 0 005.200-7.500H523z" fill="#f8c820"/><circle cx="523" cy="495" r="2.300" fill="#3c80e8" stroke="#fff" stroke-width=".8"/>
<ellipse cx="544" cy="495" rx="5" ry="5.500" fill="none" stroke="#d01830" stroke-width="1.300"/><ellipse cx="544" cy="495" rx="2.200" ry="4.300" fill="none" stroke="#d01830" stroke-width="1"/>
<rect x="556" y="485" width="18" height="20" fill="#5a2a38"/>
<rect x="560" y="490" width="10" height="10" rx="1" fill="#1a1a58"/>
<text x="561.500" y="497" style="font-size:5.500px;fill:#a8a8f0">An</text>
<rect x="561" y="503.500" width="8" height="1.400" rx=".7" fill="#e0a0e0"/>
<rect x="580" y="490" width="10" height="10" rx="1" fill="#0c2040"/>
<text x="581.500" y="497" style="font-size:5.500px;fill:#40a8f0" class="b">Ps</text>
<circle cx="606" cy="495" r="5" fill="#0a2a50"/><circle cx="607.500" cy="494" r="1.700" fill="#fff"/><path d="M601 495l5 2" stroke="#fff" stroke-width="1.300"/>
<rect x="501" y="503.500" width="2" height="1" fill="#b8b0b0"/><rect x="543" y="503.500" width="2" height="1" fill="#b8b0b0"/>
<path d="M760.500 496l2-2 2 2" class="i" stroke="#ddd"/>
<path d="M773 497l1.500-3h5l1.500 3z" fill="#ddd"/><rect x="775" y="492.500" width="3" height="2" fill="#ddd"/>
<rect x="791" y="491" width="3" height="6" rx="1.500" fill="#8a5a90"/><path d="M789.500 495c0 3 6 3 6 0M792.500 498v1.500" fill="none" stroke="#8a5a90" stroke-width=".8"/>
<text x="805" y="493" style="font-size:5px;fill:#d8d8d8">ESP</text><text x="805" y="501" style="font-size:5px;fill:#d8d8d8">LAA</text>
<rect x="824" y="491.500" width="7" height="5.500" fill="none" stroke="#ccc" stroke-width=".8"/><rect x="826" y="498" width="3" height=".8" fill="#ccc"/>
<path d="M836 494h1.500l2-1.500v6l-2-1.500H836zM841 493c1 1 1 3 0 4.500M842.500 492c1.500 1.500 1.500 5 0 6.500" fill="none" stroke="#ccc" stroke-width=".8"/>
<text x="880" y="493" text-anchor="end" style="font-size:5.200px;fill:#d8d8d8">12:50</text>
<text x="880" y="501" text-anchor="end" style="font-size:5.200px;fill:#d8d8d8">29/12/2023</text>
<path d="M884.500 497v-3a2.500 2.500 0 015 0v3l1 1h-7zM886 499h2" fill="none" stroke="#ddd" stroke-width=".8"/>
</svg>
</body></html>
